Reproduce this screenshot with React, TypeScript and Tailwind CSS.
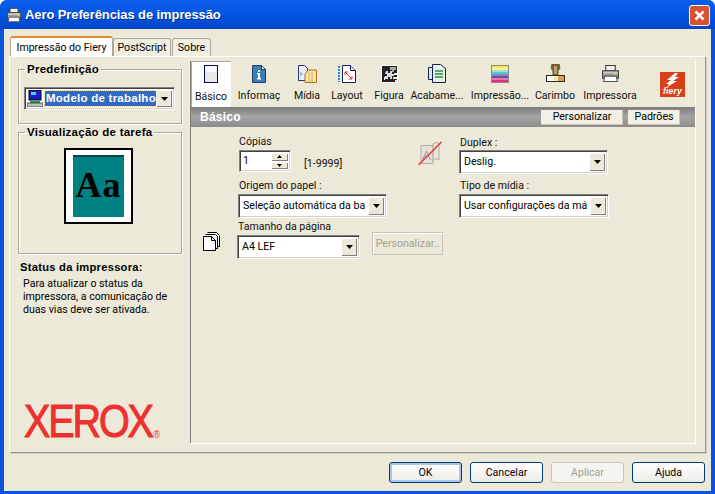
import type { ReactNode } from "react";

const sunken = "border border-t-[#808080] border-l-[#808080] border-r-white border-b-white shadow-[inset_1px_1px_0_#404040,inset_-1px_-1px_0_#d4d0c8]";
const raised = "bg-[#ece9d8] shadow-[inset_1px_1px_0_#fff,inset_-1px_-1px_0_#808080]";
const boldFont = "font-['Liberation_Sans',sans-serif] font-bold tracking-[0.25px]";

function Arrow() {
  return (
    <div className={`w-[16px] shrink-0 flex items-center justify-center ${raised}`}>
      <svg width="7" height="4" viewBox="0 0 7 4"><path d="M0 0h7L3.500 4z" fill="#000" /></svg>
    </div>
  );
}

function Select({ value, className }: { value: string; className: string }) {
  return (
    <div className={`flex p-[2px] bg-white ${sunken} ${className}`}>
      <div className="min-w-0 flex-1 whitespace-nowrap pl-[2px] pt-[1px] leading-[16px] text-black">{value}</div>
      <Arrow />
    </div>
  );
}

function Group({ title, className, children }: { title: string; className: string; children: ReactNode }) {
  return (
    <fieldset className={`border border-[#aca899] shadow-[1px_1px_0_#fff,inset_1px_1px_0_#fff] ${className}`}>
      <legend className={`ml-[6px] px-[2px] text-[11.500px] leading-[14px] text-black ${boldFont}`}>{title}</legend>
      {children}
    </fieldset>
  );
}

function Page() {
  return (
    <svg width="14" height="18" viewBox="0 0 14 18">
      <rect x=".5" y=".5" width="13" height="17" fill="#e8e8e8" stroke="#000b50" strokeWidth="1" />
      <rect x="1" y="1" width="12" height="6" fill="#fafafa" />
    </svg>
  );
}

function InfoIcon() {
  return (
    <svg width="14" height="18" viewBox="0 0 14 18">
      <path d="M.5.5h9l4 4v13H.5z" fill="#3f7fb5" stroke="#1e3a6e" />
      <path d="M9.500.5v4h4z" fill="#fff" stroke="#1e3a6e" />
      <rect x="6" y="5" width="2" height="2" fill="#fff" />
      <path d="M5 8h3v5h1v1.500H5V13h1V9.500H5z" fill="#fff" />
    </svg>
  );
}

function MediaIcon() {
  return (
    <svg width="20" height="18" viewBox="0 0 20 18">
      <path d="M1.500.5h6l3 3v12h-9z" fill="#e8eef5" stroke="#27356a" />
      <path d="M3 6l3 3-3 3z" fill="#a0b4d8" />
      <path d="M8 9l3-4h8.500v12.500H8z" fill="#f7e3ac" stroke="#b2701c" />
      <path d="M12 7v10M15 7v10" stroke="#d8b060" />
    </svg>
  );
}

function LayoutIcon() {
  return (
    <svg width="18" height="18" viewBox="0 0 18 18">
      <path d="M4.500.5h8l5 5v12h-13z" fill="#fff" stroke="#12205e" />
      <path d="M12.500.5v5h5" fill="#dde" stroke="#12205e" />
      <path d="M1 1v16" stroke="#1c8cf0" strokeWidth="2" strokeDasharray="2 1" />
      <path d="M7 7l7 7M7 7h3M7 7v3M14 14h-3M14 14v-3" stroke="#e03030" fill="none" />
    </svg>
  );
}

function FigureIcon() {
  return (
    <svg width="17" height="18" viewBox="0 0 17 18">
      <rect width="17" height="18" fill="#fff" />
      <rect x="1" y="1" width="15" height="16" fill="#222" />
      <path d="M5 6h2v2h2V6h2v3h2v2h-2v3H9v-2H7v2H4v-3h2V9H4z" fill="#ddd" />
      <path d="M9 2h6v3h-2v2h-2V5H9z" fill="#aaa" />
      <path d="M13 8h3v2h-3zM12 12h4v2h-4zM3 12h1v3H3zM14 15h2v2h-2z" fill="#eee" />
    </svg>
  );
}

function FinishIcon() {
  return (
    <svg width="19" height="19" viewBox="0 0 19 19">
      <path d="M.5 3.500h9v12h-9z" fill="#dfe7ee" stroke="#12205e" />
      <path d="M4.500.5h8l5 4v14h-13z" fill="#e8f3e8" stroke="#12205e" />
      <path d="M7 7h8M7 10h8M7 13h8" stroke="#58a868" strokeWidth="2" />
    </svg>
  );
}

function ColorIcon() {
  const bars = ["#f5ee40", "#f5f5a0", "#9fe0e0", "#55c8d8", "#8a84c0", "#5a5a98", "#f070a8", "#ee2a80"];
  return (
    <div className="flex h-[18px] w-[18px] flex-col border border-[#8a8a8a]">
      {bars.map((c) => (
        <div key={c} className="h-[2px]" style={{ background: c }} />
      ))}
    </div>
  );
}

function StampIcon() {
  return (
    <svg width="19" height="19" viewBox="0 0 19 19">
      <path d="M6 0h7l1 4-2 3v4H7V7L5 4z" fill="#7a5a32" stroke="#4d6f2c" />
      <path d="M8 2h3v8H8z" fill="#c49a70" />
      <rect x=".5" y="11.500" width="18" height="6" fill="#f7e8b8" stroke="#2e2a1a" />
      <rect x="1" y="12" width="7" height="5" fill="#fff" />
      <rect x="12" y="12" width="6" height="5" fill="#d8a050" />
    </svg>
  );
}

function PrinterIcon({ size = 19 }: { size?: number }) {
  return (
    <svg width={size} height={size} viewBox="0 0 18 18">
      <path d="M4.500 1.500h9v5h-9z" fill="#f2f2f2" stroke="#3a3a3a" />
      <path d="M1.500 6.500h15v7h-15z" fill="#9a9a9a" stroke="#3a3a3a" />
      <path d="M2 7h14v2H2z" fill="#c8c8c8" />
      <path d="M3.500 11.500h11l1 5h-13z" fill="#fff" stroke="#555" />
      <rect x="13" y="9" width="2" height="1" fill="#ff0" />
    </svg>
  );
}

function FieryLogo() {
  return (
    <div className="flex h-[25px] w-[25px] flex-col items-center overflow-hidden bg-[#d8401a]">
      <svg width="18" height="14" viewBox="0 0 18 14" className="mt-[1px]">
        <path d="M11 0L3 7h4L2 11l3 0-2 3 10-6H9l6-4h-4l3-4z" fill="#fff" />
      </svg>
      <span className={`text-[8.500px] leading-[8px] italic text-white ${boldFont}`}>fiery</span>
    </div>
  );
}

function ToolItem({ label, icon, width, selected }: { label: string; icon: ReactNode; width: string; selected?: boolean }) {
  return (
    <div className={`flex ${width} flex-col items-center whitespace-nowrap ${selected ? "bg-white shadow-[inset_1px_1px_0_#aca899]" : ""}`}>
      <div className="flex h-[22px] items-end justify-center">{icon}</div>
      <div className={`leading-[13px] ${selected ? "mt-[7px]" : "mt-[6px]"}`}>{label}</div>
    </div>
  );
}

function DialogButton({ label, isDefault, disabled }: { label: string; isDefault?: boolean; disabled?: boolean }) {
  const tone = disabled
    ? "border-[#c9c7ba] bg-[#f4f4f0] text-[#a19f92]"
    : "border-[#003c74] bg-gradient-to-b from-white to-[#ecebe5] text-black";
  const glow = isDefault ? "shadow-[inset_0_0_0_2px_#a9c4ee]" : "";
  return <div className={`flex h-[21px] w-[73px] items-center justify-center rounded-[3px] border ${tone} ${glow}`}>{label}</div>;
}

export default function App() {
  return (
    <div className="flex h-[494px] w-[715px] flex-col overflow-hidden rounded-t-[7px] bg-[#0855dd] font-['Roboto',sans-serif] text-[10.600px] text-black">
      <div className="flex h-[29px] shrink-0 items-center bg-gradient-to-b from-[#0a5fe8] via-[#0355e6] to-[#0246c8] pl-[6px] pr-[5px] pt-[1px]">
        <PrinterIcon size={16} />
        <span className="ml-[3px] flex-1 font-['Liberation_Sans',sans-serif] text-[13px] font-bold tracking-[-0.1px] text-white [text-shadow:1px_1px_0_#0f2f90]">Aero Preferências de impressão</span>
        <div className="flex h-[21px] w-[21px] items-center justify-center rounded-[3px] border border-white bg-[#d8522e]">
          <svg width="11" height="11" viewBox="0 0 11 11"><path d="M1.500 1.500l8 8M9.500 1.500l-8 8" stroke="#fff" strokeWidth="2.500" /></svg>
        </div>
      </div>

      <div className="mx-[4px] mb-[3px] flex flex-1 flex-col bg-[#ece9d8] pl-[5px] pr-[6px] pt-[7px]">
        <div className="flex h-[20px] items-end pl-[1px] leading-[13px]">
          <div className="flex h-[20px] w-[103px] items-center justify-center rounded-t-[3px] border-x border-[#aca899] border-t-2 border-t-[#e68b2c] bg-white">Impressão do Fiery</div>
          <div className="flex h-[18px] w-[58px] items-center justify-center rounded-t-[3px] border border-b-0 border-[#aca899] bg-[#f1efe2]">PostScript</div>
          <div className="ml-[1px] flex h-[18px] w-[39px] items-center justify-center rounded-t-[3px] border border-b-0 border-[#aca899] bg-[#f1efe2]">Sobre</div>
        </div>

        <div className="flex h-[396px] border-l border-t border-l-white border-t-white pl-[8px] pr-[8px] pt-[4px] shadow-[1px_1px_0_#9a9888,2px_2px_0_#d0cec0]">
          <div className="flex w-[164px] flex-col pt-[1px]">
            <Group title="Predefinição" className="h-[62px] shrink-0">
              <div className={`mx-[5px] mt-[11px] flex h-[23px] w-[151px] bg-white p-[2px] ${sunken}`}>
                <div className="flex min-w-0 flex-1 items-center overflow-hidden whitespace-nowrap">
                  <svg width="16" height="17" viewBox="0 0 16 17" className="shrink-0">
                    <rect x="2" y="0" width="12" height="10" fill="#1c1cc8" stroke="#000" />
                    <rect x="4" y="2" width="5" height="3" fill="#40d8f0" />
                    <rect x="3" y="11" width="10" height="2" fill="#20b040" />
                    <rect x="0" y="13" width="16" height="4" fill="#c0c0c0" stroke="#000" strokeWidth=".6" />
                  </svg>
                  <div className={`ml-[2px] h-[15px] min-w-0 flex-1 whitespace-nowrap bg-[#316ac5] pl-[1px] text-[11.500px] leading-[15px] text-white outline-1 outline-dotted outline-[#d8c060] ${boldFont}`}>Modelo de trabalho</div>
                </div>
                <Arrow />
              </div>
            </Group>
            <Group title="Visualização de tarefa" className="mt-[1px] h-[129px] shrink-0">
              <div className="ml-[45px] mt-[9px] h-[76px] w-[69px] border-2 border-black bg-white px-[7px] pt-[5px]">
                <div className="flex h-[62px] flex-col items-center bg-[#008080]">
                  <div className="h-[2px] w-full bg-[#004848]" />
                  <div className="mt-[8px] font-['Liberation_Serif',serif] text-[36px] leading-[40px] font-bold tracking-[1px]">Aa</div>
                </div>
              </div>
            </Group>
            <div className={`mt-[7px] pl-[2px] text-[11.200px] leading-[13px] ${boldFont}`}>Status da impressora:</div>
            <div className="mt-[3px] pl-[5px] leading-[13px]">Para atualizar o status da<br />impressora, a comunicação de<br />duas vias deve ser ativada.</div>
            <div className="mt-auto mb-[11px] ml-[6px] flex origin-left scale-x-[0.86] items-end text-[46px] leading-[40px] font-['Liberation_Sans',sans-serif] tracking-[-2.500px] text-[#ee3030] [-webkit-text-stroke:1px_#ee3030]">
              XEROX<span className="mb-[1px] ml-[2px] text-[10px] leading-[10px] tracking-normal [-webkit-text-stroke:0]">®</span>
            </div>
          </div>

          <div className="ml-[8px] flex h-[383px] w-[506px] flex-col border-b border-r border-b-white border-r-white shadow-[inset_1px_0_0_#808080]">
            <div className="flex h-[46px] text-[#111]">
              <ToolItem label="Básico" width="w-[40px] ml-[1px]" selected icon={<Page />} />
              <ToolItem label="Informaç" width="w-[56px]" icon={<InfoIcon />} />
              <ToolItem label="Mídia" width="w-[40px]" icon={<MediaIcon />} />
              <ToolItem label="Layout" width="w-[40px]" icon={<LayoutIcon />} />
              <ToolItem label="Figura" width="w-[44px]" icon={<FigureIcon />} />
              <ToolItem label="Acabame..." width="w-[52px]" icon={<FinishIcon />} />
              <ToolItem label="Impressão..." width="w-[74px]" icon={<ColorIcon />} />
              <ToolItem label="Carimbo" width="w-[34px] ml-[1px]" icon={<StampIcon />} />
              <ToolItem label="Impressora" width="w-[76px]" icon={<PrinterIcon />} />
              <div className="ml-[12px] mt-[11px]"><FieryLogo /></div>
            </div>
            <div className="ml-[1px] flex h-[20px] items-center bg-gradient-to-b from-[#7d7d7d] via-[#a5a5a5] to-[#8a8a8a] pl-[9px] pr-[15px]">
              <span className={`flex-1 text-[12px] text-white ${boldFont}`}>Básico</span>
              <div className="flex h-[15px] w-[82px] items-center justify-center bg-[#f2f0e4] shadow-[inset_-1px_-1px_0_#c8c6b8]">Personalizar</div>
              <div className="ml-[5px] flex h-[15px] w-[52px] items-center justify-center bg-[#f2f0e4] shadow-[inset_-1px_-1px_0_#c8c6b8]">Padrões</div>
            </div>

            <div className="flex flex-1 text-[#111]">
              <div className="w-[48px] pl-[12px] pt-[105px]">
                <svg width="18" height="19" viewBox="0 0 18 19">
                  <path d="M5.500.5h9l3 3v11h-2M3.500 2.500h10l2 2v12h-2M1.500 4.500h8l4 4v10h-12z" fill="#fff" stroke="#000" />
                  <path d="M9.500 4.500v4h4" fill="none" stroke="#000" />
                </svg>
              </div>
              <div className="w-[221px] pt-[8px]">
                <div className="flex h-[37px]">
                  <div className="w-[66px] pl-[1px]">
                    <div className="leading-[14px]">Cópias</div>
                    <div className={`mt-[1px] flex h-[22px] w-[52px] bg-white p-[2px] ${sunken}`}>
                      <div className="flex-1 pl-[1px] leading-[16px] text-black">1</div>
                      <div className="flex w-[17px] flex-col gap-[1px]">
                        <div className={`flex flex-1 items-center justify-center ${raised}`}><svg width="5" height="3" viewBox="0 0 5 3"><path d="M0 3h5L2.500 0z" /></svg></div>
                        <div className={`flex flex-1 items-center justify-center ${raised}`}><svg width="5" height="3" viewBox="0 0 5 3"><path d="M0 0h5L2.500 3z" /></svg></div>
                      </div>
                    </div>
                  </div>
                  <div className="w-[40px] pt-[22px] leading-[14px]">[1-9999]</div>
                  <div className="ml-[73px] pt-[5px]">
                    <svg width="26" height="26" viewBox="0 0 25 26">
                      <path d="M3.500 5.500h12v18h-12z" fill="#e4e2d6" stroke="#b0aea2" />
                      <path d="M15.500 4c3-2 5-2 6 0v16c-2-2-4-1-6 1z" fill="#e4e2d6" stroke="#b0aea2" />
                      <path d="M5 20l4-9 4 9M6.500 16h5" stroke="#8a94c0" fill="none" />
                      <path d="M1 25L24 2" stroke="#ee3030" strokeWidth="1.500" />
                    </svg>
                  </div>
                </div>
                <div className="mt-[7px] pl-[1px] leading-[14px]">Origem do papel :</div>
                <Select value="Seleção automática da ba" className="mt-[1px] h-[24px] w-[149px]" />
                <div className="mt-[2px] leading-[14px]">Tamanho da página</div>
                <div className="flex items-start">
                  <Select value="A4 LEF" className="mt-[1px] -ml-[1px] h-[24px] w-[123px]" />
                  <div className="ml-[12px] -mt-[2px] flex h-[23px] w-[71px] items-center justify-center border border-[#c8c6b8] text-[#a19f92] shadow-[inset_1px_1px_0_#fff]">Personalizar..</div>
                </div>
              </div>
              <div className="w-[150px] pt-[9px]">
                <div className="pl-[1px] leading-[14px]">Duplex :</div>
                <Select value="Deslig." className="h-[24px] w-[149px]" />
                <div className="mt-[5px] pl-[1px] leading-[14px]">Tipo de mídia :</div>
                <Select value="Usar configurações da má" className="mt-[1px] h-[24px] w-[150px]" />
              </div>
            </div>
          </div>
        </div>

        <div className="flex justify-end gap-[8px] pt-[10px]">
          <DialogButton label="OK" isDefault />
          <DialogButton label="Cancelar" />
          <DialogButton label="Aplicar" disabled />
          <DialogButton label="Ajuda" />
        </div>
      </div>
    </div>
  );
}
